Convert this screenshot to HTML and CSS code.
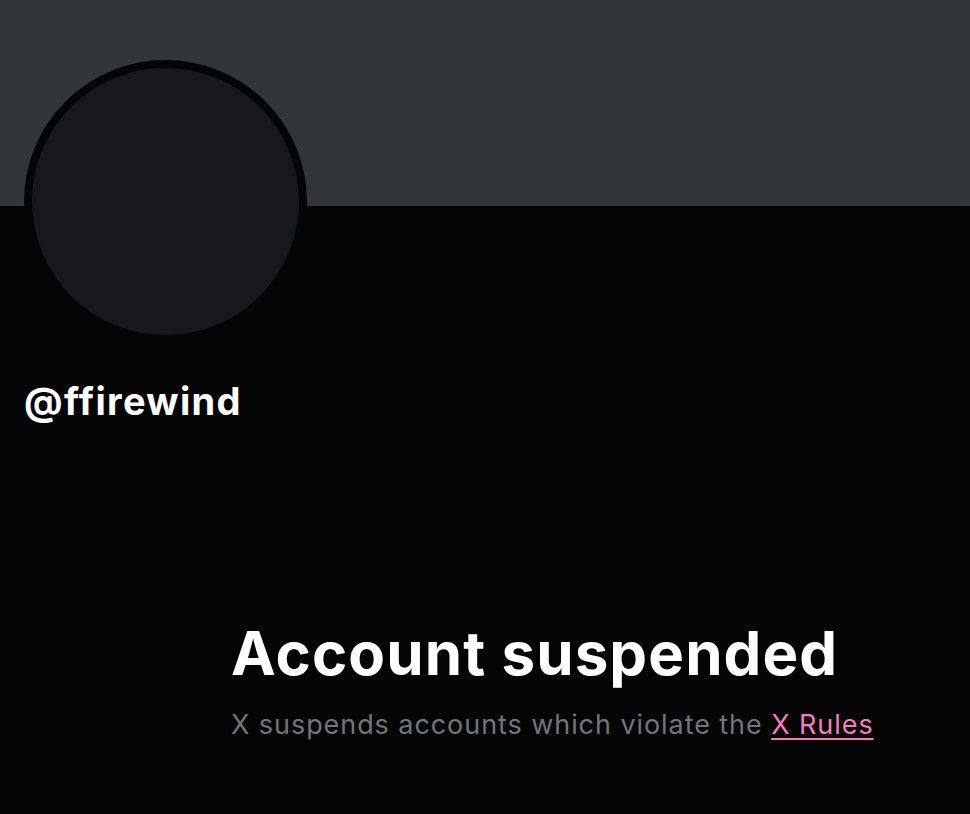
FILE: index.html
```html
<!DOCTYPE html>
<html lang="en">
<head>
<meta charset="utf-8">
<title>@ffirewind</title>
<link rel="stylesheet" href="styles.css">
</head>
<body>
<div class="page">
  <div class="banner"></div>
  <div class="profile">
    <div class="avatar"><div class="avatar-inner"></div></div>
    <div class="handle">@ffirewind</div>
  </div>
  <div class="notice">
    <h1 class="notice-title">Account suspended</h1>
    <p class="notice-text">X suspends accounts which violate the <a class="notice-link" href="#">X Rules</a></p>
  </div>
</div>
</body>
</html>
```
FILE: styles.css
```css
html, body {
  margin: 0;
  padding: 0;
  background: #050505;
}
body {
  font-family: Inter, "Liberation Sans", sans-serif;
  color: #e7e9ea;
}
.page {
  width: 970px;
  height: 814px;
  overflow: hidden;
}
.banner {
  height: 206px;
  background: #333639;
}
.profile {
  padding-left: 24px;
  margin-top: -146px;
}
.avatar {
  width: 283px;
  height: 283px;
  box-sizing: border-box;
  border-radius: 50%;
  border: 8px solid #050505;
  background: #16181c;
}
.avatar-inner {
  width: 100%;
  height: 100%;
}
.handle {
  margin-top: 35px;
  font-size: 38px;
  font-weight: 700;
  color: #ffffff;
  line-height: 46px;
  letter-spacing: 1.3px;
}
.notice {
  padding-left: 231px;
  margin-top: 193px;
}
.notice-title {
  margin: 0;
  font-size: 60px;
  font-weight: 700;
  color: #ffffff;
  line-height: 72px;
  letter-spacing: 1.1px;
}
.notice-text {
  margin: 18px 0 0;
  font-size: 27px;
  font-weight: 400;
  line-height: 36px;
  color: #71767b;
  letter-spacing: 0.93px;
}
.notice-link {
  color: #f77cbd;
  text-decoration: underline;
  text-underline-offset: 4px;
  text-decoration-thickness: 2px;
}
```
